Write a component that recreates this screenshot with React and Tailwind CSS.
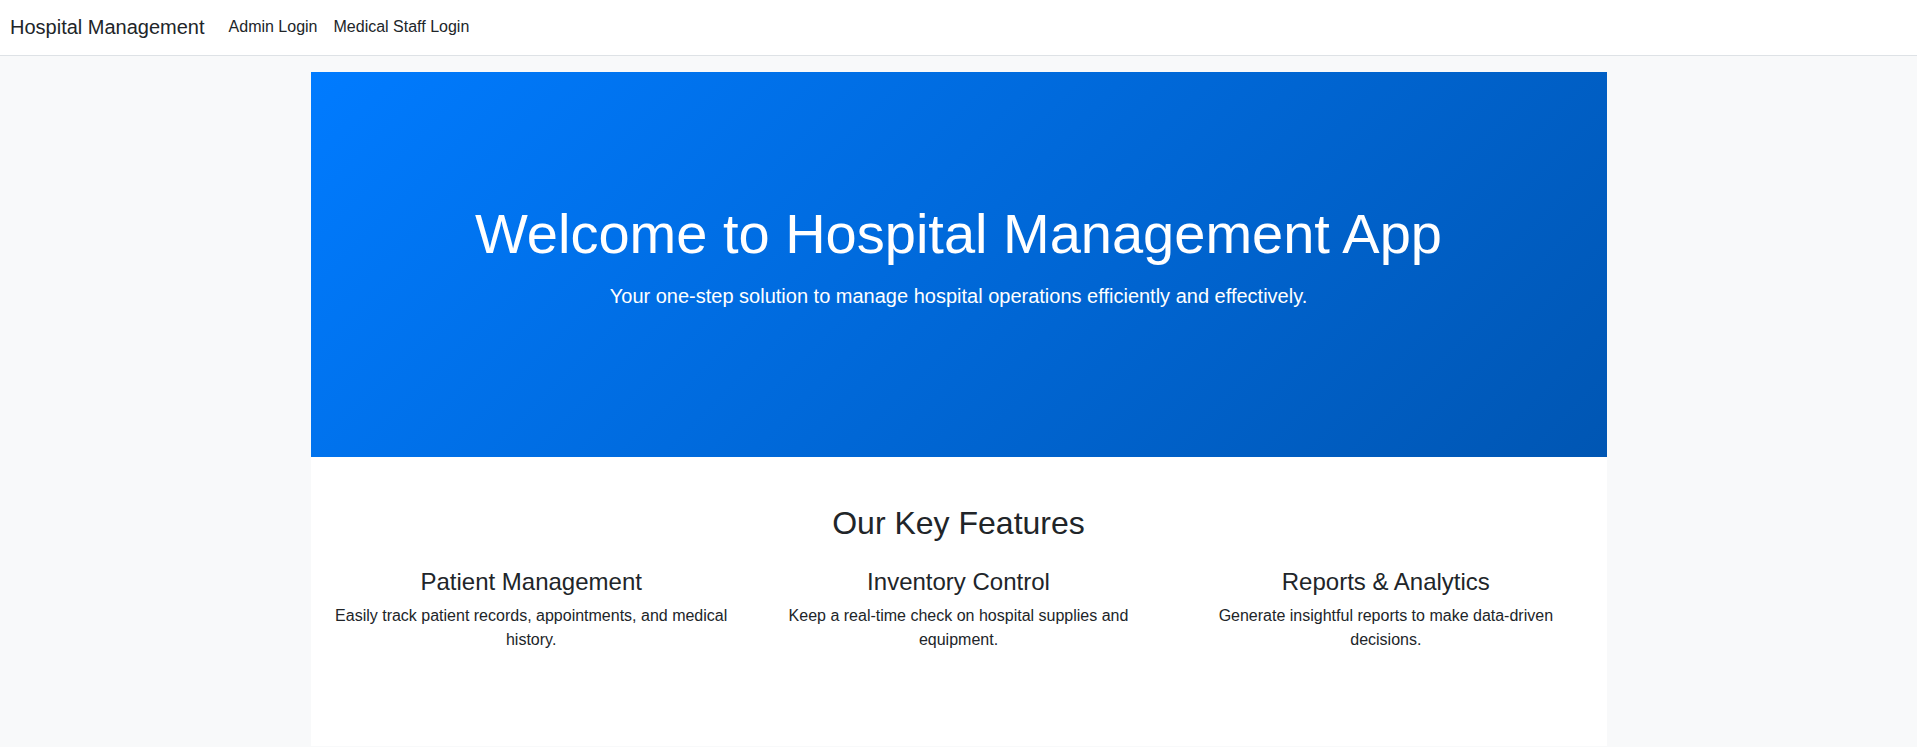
export default function App() {
  const features = [
    {
      title: "Patient Management",
      text: "Easily track patient records, appointments, and medical history.",
    },
    {
      title: "Inventory Control",
      text: "Keep a real-time check on hospital supplies and equipment.",
    },
    {
      title: "Reports & Analytics",
      text: "Generate insightful reports to make data-driven decisions.",
    },
  ];

  return (
    <div className="min-h-screen bg-[#f8f9fa] text-[#212529] font-['Liberation_Sans',Arial,sans-serif]">
      {/* Navbar */}
      <nav className="h-[56px] bg-white border-b border-[#dee2e6] flex items-center px-[10px] pb-[2px]">
        <a href="#" className="text-[20px] mr-[16px] text-[#212529]">
          Hospital Management
        </a>
        <a href="#" className="text-[16px] px-[8px] text-[#212529]">
          Admin Login
        </a>
        <a href="#" className="text-[16px] px-[8px] text-[#212529]">
          Medical Staff Login
        </a>
      </nav>

      <div className="w-[1296px] mx-auto mt-[16px]">
        {/* Hero */}
        <section className="h-[385px] bg-[linear-gradient(135deg,#007bff,#0056b3)] text-white text-center pt-[128px]">
          <h1 className="text-[56px] leading-[1.2] mb-[14px]">
            Welcome to Hospital Management App
          </h1>
          <p className="text-[20px] leading-[30px]">
            Your one-step solution to manage hospital operations efficiently and effectively.
          </p>
        </section>

        {/* Features */}
        <section className="bg-white text-center pt-[47px] h-[289px]">
          <h2 className="text-[32px] leading-[1.2] mb-[26px]">Our Key Features</h2>
          <div className="grid grid-cols-3 px-[7px]">
            {features.map((f) => (
              <div key={f.title} className="px-[12px]">
                <h4 className="text-[24px] leading-[1.2] mb-[7px]">{f.title}</h4>
                <p className="text-[16px] leading-[24px]">{f.text}</p>
              </div>
            ))}
          </div>
        </section>
      </div>
    </div>
  );
}
